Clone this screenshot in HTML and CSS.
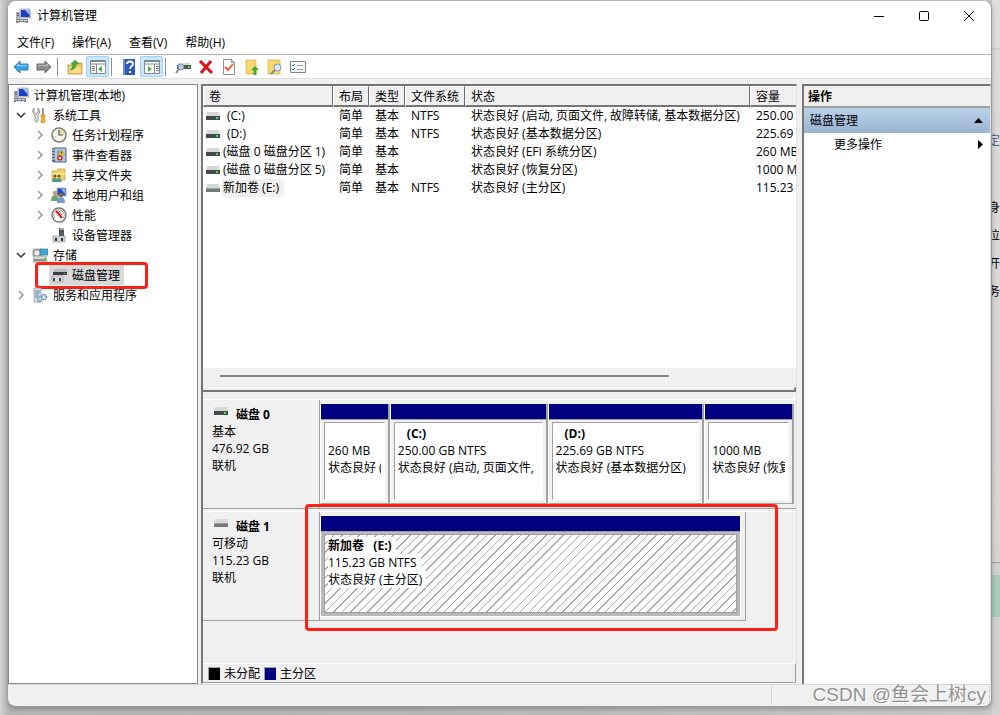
FILE: index.html
```html
<!DOCTYPE html>
<html lang="zh-CN">
<head>
    <meta charset="UTF-8">
    <meta name="viewport" content="width=device-width, initial-scale=1.0">
    <title>计算机管理</title>
    <link rel="stylesheet" href="styles.css">
</head>
<body>
    <!-- 图标库 -->
    <svg class="sprite" aria-hidden="true">
        <symbol id="i-computer" viewBox="0 0 16 16">
            <path d="M5 1h10l1 9H5z" fill="#c9cdd4" stroke="#8b8f98" stroke-width=".6"/>
            <path d="M6 2h8l.7 7H6z" fill="#1c3fc4"/>
            <path d="M10 2h4l.5 5z" fill="#9dc1f5"/>
            <path d="M1 4h4v8H1z" fill="#a9aeb3"/>
            <path d="M2 5h2v1H2zM2 7h2v1H2z" fill="#5d656e"/>
            <path d="M1 11h12v4H1z" fill="#7d858c"/>
            <path d="M2 12h2v1H2zM5 12h3v1H5zM9 12h3v1H9zM3 14h8v1H3z" fill="#e1e4e6"/>
        </symbol>
        <symbol id="i-tools" viewBox="0 0 16 16">
            <path d="M2 1v4l2 2 2-2V1q3 2 1 6l-1 1v6q-2 3-3 0V8Q-1 5 2 1z" fill="#dfe2e4" stroke="#7d8184" stroke-width=".8"/>
            <path d="M10 1h2v7h-2z" fill="#9a9a9a"/>
            <path d="M9 8h4v2h-1l1 5q-2 2-4 0l1-5H9z" fill="#f5b51c" stroke="#b77908" stroke-width=".6"/>
        </symbol>
        <symbol id="i-clock" viewBox="0 0 16 16">
            <circle cx="8" cy="8" r="7" fill="#f7f3e4" stroke="#7c7c7c" stroke-width="1.5"/>
            <path d="M8 8V2a6 6 0 0 1 6 6z" fill="#f1d99a"/>
            <path d="M8 3v5h4" fill="none" stroke="#3b5e91" stroke-width="1.2"/>
        </symbol>
        <symbol id="i-event" viewBox="0 0 16 16">
            <path d="M3 1h12v14H3z" fill="#b4cce3" stroke="#46627f"/>
            <path d="M1 1h3v14H1z" fill="#526f8c"/>
            <path d="M1 3h3M1 6h3M1 9h3M1 12h3" stroke="#dce7f0"/>
            <path d="M6 4h3M6 6h2M6 8h2M6 10h1M6 12h1" stroke="#5d7fa3"/>
            <path d="M10.500 3l3.500 5H7z" fill="#f8cf21" stroke="#a7820a" stroke-width=".5"/>
            <path d="M10.500 4.500v2" stroke="#333"/>
            <circle cx="9" cy="11" r="2.800" fill="#d9372b"/>
            <path d="M8 10l2 2m0-2l-2 2" stroke="#fff"/>
        </symbol>
        <symbol id="i-share" viewBox="0 0 16 16">
            <path d="M1 4h5l1-2h7v11H1z" fill="#f4cf62" stroke="#c69c2d" stroke-width=".7"/>
            <path d="M1 6h13v2H1z" fill="#fbe59e"/>
            <circle cx="4" cy="9" r="1.5" fill="#6a5136"/><circle cx="8" cy="9" r="1.5" fill="#6a5136"/>
            <path d="M1 15q0-4 3-4t2 4zM6 15q0-4 2-4t3 4z" fill="#4c9b86"/>
        </symbol>
        <symbol id="i-users" viewBox="0 0 16 16">
            <path d="M6 1h9v8H6z" fill="#1f49c9" stroke="#b4bac6"/>
            <path d="M10 2h4v5z" fill="#8eb5f2"/>
            <circle cx="4" cy="6" r="2.3" fill="#c79c66"/><circle cx="10" cy="8" r="2.3" fill="#8f6337"/>
            <path d="M0 14q0-6 4-6t4 6z" fill="#6ba56b"/>
            <path d="M6 16q0-6 4-6t4 6z" fill="#7a99cf"/>
        </symbol>
        <symbol id="i-perf" viewBox="0 0 16 16">
            <circle cx="8" cy="8" r="7" fill="#fff" stroke="#777" stroke-width="1.4"/>
            <path d="M4 11a5 5 0 1 1 8 0" fill="none" stroke="#999"/>
            <path d="M5 4l6 7" stroke="#d22323" stroke-width="2"/>
            <path d="M8 4l3 4" stroke="#d22323"/>
        </symbol>
        <symbol id="i-device" viewBox="0 0 16 16">
            <path d="M8 1h5v9H8z" fill="#4f5254"/><path d="M9 1h4v2H9z" fill="#a7aaac"/>
            <path d="M11 6h1v1h-1z" fill="#3fe04e"/>
            <path d="M2 9h12v6H2z" fill="#d2d5d7" stroke="#898c8f" stroke-width=".6"/>
            <path d="M4 11h2v3H4zM10 11h2v3h-2z" fill="#303235"/>
        </symbol>
        <symbol id="i-storage" viewBox="0 0 16 16">
            <path d="M1 2h9v7H1z" fill="#cfd2d3" stroke="#8d9193" stroke-width=".6"/>
            <circle cx="5" cy="6" r="3.5" fill="#e8eaec" stroke="#777"/>
            <path d="M8 2h8v6H8z" fill="#40a8d9" stroke="#2a718f" stroke-width=".6"/>
            <path d="M2 9h12l1 6H1z" fill="#d5d8da" stroke="#808487" stroke-width=".6"/>
            <path d="M2 12h11v2H2z" fill="#8b9092"/><path d="M12 11h2v3h-2z" fill="#4fd04d"/>
        </symbol>
        <symbol id="i-diskmgr" viewBox="0 0 16 16">
            <path d="M4 2h12v3H2z" fill="#b8bbbd"/><path d="M2 5h14v3H2z" fill="#3c3f41"/>
            <path d="M13 6h1v1h-1z" fill="#41dd4e"/>
            <path d="M1 9h11v6H1z" fill="#d9dbdc" stroke="#96999b" stroke-width=".6"/>
            <path d="M2 11h2v3H2zM8 11h2v3H8z" fill="#3b3e40"/>
        </symbol>
        <symbol id="i-services" viewBox="0 0 16 16">
            <path d="M2 1h7v14H2z" fill="#dbe4e9" stroke="#899ba7" stroke-width=".8"/>
            <path d="M3 4h5M3 6h5M3 8h4M3 10h3" stroke="#67839a"/>
            <circle cx="8" cy="12" r="2.5" fill="#c4d6e4" stroke="#6d8ba4" stroke-width="1.5" stroke-dasharray="1.3 .7"/>
            <circle cx="12" cy="10" r="2.5" fill="#dce8f0" stroke="#5d819f" stroke-width="1.5" stroke-dasharray="1.3 .7"/>
        </symbol>
        <symbol id="i-drive" viewBox="0 0 14 8">
            <path d="M1 0h12l1 4H0z" fill="#d5d7d9"/><path d="M0 4h14v4H0z" fill="#46494b"/>
            <path d="M10 5h2v2h-2z" fill="#3de24a"/>
        </symbol>
        <symbol id="i-drive-off" viewBox="0 0 14 8">
            <path d="M1 0h12l1 4H0z" fill="#d5d7d9"/><path d="M0 4h14v4H0z" fill="#77797b"/>
            <path d="M0 4h14v1H0z" fill="#999c9e"/>
        </symbol>
        <symbol id="i-back" viewBox="0 0 16 16">
            <path d="M1 8l6-6v3h8v6H7v3z" fill="#37a5e6" stroke="#3879ad"/><path d="M3 7l3-3v2h8v1z" fill="#83cdf6"/>
        </symbol>
        <symbol id="i-forward" viewBox="0 0 16 16">
            <path d="M15 8L9 2v3H1v6h8v3z" fill="#8f8f8f" stroke="#696969"/><path d="M13 7l-3-3v2H2v1z" fill="#bcbcbc"/>
        </symbol>
        <symbol id="i-up" viewBox="0 0 16 16">
            <path d="M1 6h8l1-2h5v11H1z" fill="#efc75f" stroke="#b99237" stroke-width=".8"/>
            <path d="M2 8h12v6H2z" fill="#f9dd8d"/>
            <path d="M3 11q3-1 3-6H4l4-4 4 4H9q0 6-6 6z" fill="#43b338" stroke="#2c8423" stroke-width=".5"/>
        </symbol>
        <symbol id="i-tree" viewBox="0 0 16 14">
            <path d="M.5.500h15v13H.5z" fill="#fff" stroke="#7e8890"/><path d="M1 1h14v1H1z" fill="#7e8890"/>
            <path d="M1 4h14M6.500 4v9" stroke="#7e8890"/><path d="M2 6.500h3M2 8.500h3M2 10.500h3" stroke="#64798b"/>
            <path d="M12 6v6L8 9z" fill="#4aac3b"/>
        </symbol>
        <symbol id="i-help" viewBox="0 0 16 16">
            <path d="M2 0h12v16H2z" fill="#3059b9"/><path d="M2 0h2v16H2z" fill="#6c8bd3"/>
            <path d="M6 5q0-2.500 3-2.500T12 5q0 1-1.500 2.200Q9 8.500 9 10" fill="none" stroke="#fff" stroke-width="1.800"/>
            <path d="M8 12h2v2H8z" fill="#fff"/>
        </symbol>
        <symbol id="i-pane" viewBox="0 0 16 14">
            <path d="M.5.500h15v13H.5z" fill="#fff" stroke="#7e8890"/><path d="M1 1h14v1H1z" fill="#7e8890"/>
            <path d="M1 4h14M10.500 4v9" stroke="#7e8890"/><path d="M12 6.500h3M12 8.500h3M12 10.500h3" stroke="#64798b"/>
            <path d="M4 6v6l4-3z" fill="#4aac3b"/>
        </symbol>
        <symbol id="i-scan" viewBox="0 0 16 16">
            <path d="M3 4h12l1 2H2z" fill="#d5d7d9"/><path d="M2 6h14v4H2z" fill="#505457"/>
            <path d="M13 7h2v2h-2z" fill="#3de24a"/>
            <circle cx="6" cy="8" r="3" fill="#b7d0e2" stroke="#758b9b"/><path d="M4 10l-3 4" stroke="#828b92" stroke-width="2"/>
        </symbol>
        <symbol id="i-delete" viewBox="0 0 16 16">
            <path d="M2 2l12 12M13 2L3 14" stroke="#d80f17" stroke-width="3"/>
        </symbol>
        <symbol id="i-check" viewBox="0 0 16 16">
            <path d="M2.500.500h8l3 3v12h-11z" fill="#fdfdfd" stroke="#8b9195"/><path d="M10.500.500v3h3" fill="none" stroke="#8b9195"/>
            <path d="M4 8l3 3 5-6" fill="none" stroke="#e3572b" stroke-width="1.800"/>
        </symbol>
        <symbol id="i-export" viewBox="0 0 16 16">
            <path d="M2 1h10v14H2z" fill="#f8d771" stroke="#d6ae45" stroke-width=".7"/><path d="M12 8l2 2v5h-2z" fill="#fff0ba"/>
            <path d="M11 7l4 4h-2.500v5h-3v-5H7z" fill="#38af32"/>
        </symbol>
        <symbol id="i-find" viewBox="0 0 16 16">
            <path d="M1 1h12v14H1z" fill="#f8d771" stroke="#d6ae45" stroke-width=".7"/>
            <circle cx="10.500" cy="8.500" r="3.500" fill="#d5ebf7" stroke="#8599a7"/><path d="M8 11l-4 4" stroke="#7f8a92" stroke-width="2"/>
        </symbol>
        <symbol id="i-props" viewBox="0 0 16 12">
            <path d="M.5.500h15v11H.5z" fill="#f9fafb" stroke="#7c858c"/>
            <path d="M2 4l1 1 2-2M2 8l1 1 2-2" fill="none" stroke="#2f75b7"/><path d="M7 4.500h6M7 8.500h6" stroke="#9aa2a8"/>
        </symbol>
        <symbol id="i-open" viewBox="0 0 10 10"><path d="M1 3l4 4 4-4" fill="none" stroke="#333" stroke-width="1.500"/></symbol>
        <symbol id="i-closed" viewBox="0 0 10 10"><path d="M3 1l4 4-4 4" fill="none" stroke="#8c8c8c" stroke-width="1.300"/></symbol>
    </svg>

    <!-- 窗口后面的网页 -->
    <div class="backdrop">
        <div class="backdrop-head"></div>
        <div class="backdrop-text"><span>定</span><span>身</span><span>位</span><span>开</span><span>务</span></div>
        <div class="backdrop-green"></div>
    </div>

    <main class="window">
        <header class="titlebar">
            <svg class="icon"><use href="#i-computer"/></svg>
            <span class="title">计算机管理</span>
            <button class="win-btn" aria-label="最小化"><svg viewBox="0 0 12 12"><path d="M1 6.500h10"/></svg></button>
            <button class="win-btn" aria-label="最大化"><svg viewBox="0 0 12 12"><rect x="1.500" y="1.500" width="9" height="9" rx="1"/></svg></button>
            <button class="win-btn" aria-label="关闭"><svg viewBox="0 0 12 12"><path d="M1 1l10 10M11 1L1 11"/></svg></button>
        </header>

        <nav class="menubar">
            <button>文件(F)</button>
            <button>操作(A)</button>
            <button>查看(V)</button>
            <button>帮助(H)</button>
        </nav>

        <div class="toolbar">
            <button aria-label="后退"><svg class="icon"><use href="#i-back"/></svg></button>
            <button aria-label="前进"><svg class="icon"><use href="#i-forward"/></svg></button>
            <span class="sep"></span>
            <button aria-label="向上"><svg class="icon"><use href="#i-up"/></svg></button>
            <button class="on" aria-label="显示控制台树"><svg class="icon"><use href="#i-tree"/></svg></button>
            <span class="sep"></span>
            <button aria-label="帮助"><svg class="icon"><use href="#i-help"/></svg></button>
            <button class="on" aria-label="显示操作窗格"><svg class="icon"><use href="#i-pane"/></svg></button>
            <span class="sep"></span>
            <button aria-label="重新扫描"><svg class="icon"><use href="#i-scan"/></svg></button>
            <button aria-label="删除"><svg class="icon"><use href="#i-delete"/></svg></button>
            <button aria-label="标记"><svg class="icon"><use href="#i-check"/></svg></button>
            <button aria-label="打开"><svg class="icon"><use href="#i-export"/></svg></button>
            <button aria-label="浏览"><svg class="icon"><use href="#i-find"/></svg></button>
            <button aria-label="属性"><svg class="icon"><use href="#i-props"/></svg></button>
        </div>

        <div class="panes">
            <!-- 左侧：控制台树 -->
            <aside class="tree">
                <div class="node root"><svg class="icon"><use href="#i-computer"/></svg><span>计算机管理(本地)</span></div>
                <ul>
                    <li>
                        <div class="node"><button class="chev" aria-label="折叠"><svg><use href="#i-open"/></svg></button><svg class="icon"><use href="#i-tools"/></svg><span>系统工具</span></div>
                        <ul>
                            <li class="node"><button class="chev" aria-label="展开"><svg><use href="#i-closed"/></svg></button><svg class="icon"><use href="#i-clock"/></svg><span>任务计划程序</span></li>
                            <li class="node"><button class="chev" aria-label="展开"><svg><use href="#i-closed"/></svg></button><svg class="icon"><use href="#i-event"/></svg><span>事件查看器</span></li>
                            <li class="node"><button class="chev" aria-label="展开"><svg><use href="#i-closed"/></svg></button><svg class="icon"><use href="#i-share"/></svg><span>共享文件夹</span></li>
                            <li class="node"><button class="chev" aria-label="展开"><svg><use href="#i-closed"/></svg></button><svg class="icon"><use href="#i-users"/></svg><span>本地用户和组</span></li>
                            <li class="node"><button class="chev" aria-label="展开"><svg><use href="#i-closed"/></svg></button><svg class="icon"><use href="#i-perf"/></svg><span>性能</span></li>
                            <li class="node"><i class="chev"></i><svg class="icon"><use href="#i-device"/></svg><span>设备管理器</span></li>
                        </ul>
                    </li>
                    <li>
                        <div class="node"><button class="chev" aria-label="折叠"><svg><use href="#i-open"/></svg></button><svg class="icon"><use href="#i-storage"/></svg><span>存储</span></div>
                        <ul>
                            <li class="node marked"><i class="chev"></i><div class="selected"><svg class="icon"><use href="#i-diskmgr"/></svg><span>磁盘管理</span></div></li>
                        </ul>
                    </li>
                    <li class="node"><button class="chev" aria-label="展开"><svg><use href="#i-closed"/></svg></button><svg class="icon"><use href="#i-services"/></svg><span>服务和应用程序</span></li>
                </ul>
            </aside>

            <!-- 中间：卷列表和磁盘图 -->
            <section class="center">
                <div class="volumes">
                    <table>
                        <colgroup><col class="c-name"><col class="c-short"><col class="c-short"><col class="c-fs"><col class="c-status"><col class="c-size"></colgroup>
                        <thead>
                            <tr><th>卷</th><th>布局</th><th>类型</th><th>文件系统</th><th>状态</th><th>容量</th></tr>
                        </thead>
                        <tbody>
                            <tr><td><svg class="drive"><use href="#i-drive"/></svg><span class="letter">(C:)</span></td><td>简单</td><td>基本</td><td>NTFS</td><td>状态良好 (启动, 页面文件, 故障转储, 基本数据分区)</td><td>250.00 GB</td></tr>
                            <tr><td><svg class="drive"><use href="#i-drive"/></svg><span class="letter">(D:)</span></td><td>简单</td><td>基本</td><td>NTFS</td><td>状态良好 (基本数据分区)</td><td>225.69 GB</td></tr>
                            <tr><td><svg class="drive"><use href="#i-drive"/></svg><span>(磁盘 0 磁盘分区 1)</span></td><td>简单</td><td>基本</td><td></td><td>状态良好 (EFI 系统分区)</td><td>260 MB</td></tr>
                            <tr><td><svg class="drive"><use href="#i-drive"/></svg><span>(磁盘 0 磁盘分区 5)</span></td><td>简单</td><td>基本</td><td></td><td>状态良好 (恢复分区)</td><td>1000 MB</td></tr>
                            <tr><td><svg class="drive"><use href="#i-drive-off"/></svg><span class="current">新加卷 (E:)</span></td><td>简单</td><td>基本</td><td>NTFS</td><td>状态良好 (主分区)</td><td>115.23 GB</td></tr>
                        </tbody>
                    </table>
                </div>
                <div class="hscroll"><div class="thumb"></div></div>
                <div class="splitter"></div>

                <div class="disks">
                    <div class="disk">
                        <div class="disk-info">
                            <h2><svg class="drive"><use href="#i-drive"/></svg>磁盘 0</h2>
                            <p>基本</p><p>476.92 GB</p><p>联机</p>
                        </div>
                        <div class="parts parts-four">
                            <div class="part"><div class="bar"></div><div class="box"><p>&nbsp;</p><p>260 MB</p><p>状态良好 (</p></div></div>
                            <div class="part"><div class="bar"></div><div class="box"><p class="name letter-only">(C:)</p><p>250.00 GB NTFS</p><p>状态良好 (启动, 页面文件,</p></div></div>
                            <div class="part"><div class="bar"></div><div class="box"><p class="name letter-only">(D:)</p><p>225.69 GB NTFS</p><p>状态良好 (基本数据分区)</p></div></div>
                            <div class="part"><div class="bar"></div><div class="box"><p>&nbsp;</p><p>1000 MB</p><p>状态良好 (恢复分区)</p></div></div>
                        </div>
                    </div>
                    <div class="disk removable">
                        <div class="disk-info">
                            <h2><svg class="drive"><use href="#i-drive-off"/></svg>磁盘 1</h2>
                            <p>可移动</p><p>115.23 GB</p><p>联机</p>
                        </div>
                        <div class="parts parts-one">
                            <div class="part active"><div class="bar"></div><div class="box"><p class="name"><span>新加卷&nbsp;&nbsp; (E:)</span></p><p><span>115.23 GB NTFS</span></p><p><span>状态良好 (主分区)</span></p></div></div>
                        </div>
                        <div class="mark"></div>
                    </div>
                </div>

                <div class="legend">
                    <span class="swatch black"></span>未分配
                    <span class="swatch navy"></span>主分区
                </div>
            </section>

            <!-- 右侧：操作 -->
            <aside class="actions">
                <h2>操作</h2>
                <button class="group">磁盘管理<svg viewBox="0 0 9 5"><path d="M0 5L4.500 0 9 5z"/></svg></button>
                <button class="more">更多操作<svg viewBox="0 0 5 9"><path d="M0 0l5 4.500L0 9z"/></svg></button>
            </aside>
        </div>

        <footer class="statusbar"><span></span><span></span><span></span></footer>
        <div class="watermark">CSDN @鱼会上树cy</div>
    </main>
</body>
</html>
```

FILE: styles.css
```css
* {
    box-sizing: border-box;
}

body {
    margin: 0;
    padding: 1px 8px 8px;
    min-height: 100vh;
    position: relative;
    background: linear-gradient(90deg, #d2d3d3, #b4b4b4 8px, #b9b9b9 50%, #c8c8c8);
    color: #000;
    font: 12px/17px "Open Sans", "Noto Sans CJK SC", sans-serif;
}

h2, p, ul {
    margin: 0;
    padding: 0;
    font-size: 12px;
}

ul {
    list-style: none;
}

button {
    border: 0;
    padding: 0;
    background: none;
    color: inherit;
    font: inherit;
}

svg {
    display: block;
    flex: none;
}

.sprite {
    position: absolute;
    width: 0;
    height: 0;
}

.icon {
    width: 16px;
    height: 16px;
}

.drive {
    width: 14px;
    height: 8px;
}

/* 背景网页 */
.backdrop {
    position: absolute;
    top: 0;
    right: 0;
    bottom: 0;
    width: 8px;
    overflow: hidden;
    background: #d2d2d2;
}

.backdrop-head {
    height: 50px;
    background: #dedede;
    border-bottom: 2px solid #cfcfcf;
}

.backdrop-text {
    display: flex;
    flex-direction: column;
    gap: 11px;
    height: 513px;
    padding-top: 82px;
    border-bottom: 1px solid #999;
    background: linear-gradient(#dcdcdc, #d8d4d2);
    white-space: nowrap;
    direction: rtl;
}

    .backdrop-text span:first-child {
        color: #50618a;
        margin-bottom: 39px;
    }

.backdrop-green {
    height: 42px;
    margin-top: 12px;
    background: #aacdb9;
}

/* 窗口 */
.window {
    display: flex;
    flex-direction: column;
    min-height: calc(100vh - 9px);
    position: relative;
    overflow: hidden;
    border: solid #999;
    border-width: 0 1px 1px 0;
    border-radius: 8px;
    background: #f0f0f0;
    box-shadow: 0 2px 5px rgba(0, 0, 0, .25);
}

.titlebar {
    display: flex;
    align-items: center;
    height: 29px;
    padding-left: 7px;
    background: #fff;
}

.title {
    flex: 1;
    margin-left: 6px;
}

.win-btn {
    width: 45px;
    height: 28px;
}

    .win-btn svg {
        width: 12px;
        height: 12px;
        margin: auto;
        fill: none;
        stroke: #000;
    }

.menubar {
    display: flex;
    gap: 18px;
    height: 25px;
    padding-left: 9px;
    background: #fff;
    border-bottom: 1px solid #b3b3b3;
}

.toolbar {
    display: flex;
    align-items: center;
    height: 24px;
    padding-left: 1px;
    background: #fff;
    border-bottom: 1px solid #dcdcdc;
}

    .toolbar button {
        display: flex;
        align-items: center;
        justify-content: center;
        width: 23px;
        height: 21px;
    }

    .toolbar .on {
        border: 1px solid #99d1ff;
        border-radius: 2px;
        background: #cce8ff;
    }

.sep {
    width: 1px;
    height: 18px;
    margin: 0 5px 0 2px;
    background: #8d8d8d;
}

.panes {
    display: grid;
    grid-template-columns: 190px minmax(0, 1fr) 189px;
    flex: 1;
    margin-top: 5px;
}

/* 控制台树 */
.tree {
    border: 1px solid #828790;
    padding: 0 1px;
    background: #fff;
}

    .tree ul ul {
        padding-left: 19px;
    }

.node {
    display: flex;
    align-items: center;
    height: 20px;
    position: relative;
    white-space: nowrap;
}

    .node span {
        margin-left: 5px;
    }

.root {
    padding-left: 3px;
}

.chev {
    flex: none;
    width: 22px;
}

    .chev svg {
        width: 10px;
        height: 10px;
        margin: auto;
    }

.selected {
    display: flex;
    align-items: center;
    height: 20px;
    margin-left: -2px;
    padding: 0 4px 0 2px;
    background: #d9d9d9;
}

/* 红色标注框 */
.marked::after,
.mark {
    content: "";
    position: absolute;
    border: 3px solid #ff2015;
    border-radius: 4px;
}

.marked::after {
    inset: -3px 48px -4px 6px;
}

.mark {
    inset: -8px 18px -10px 102px;
}

/* 中间窗格 */
.center {
    display: flex;
    flex-direction: column;
    margin: 0 5px 0 3px;
    border-top: 2px solid #767676;
    border-left: 2px solid #767676;
    border-right: 1px solid #e3e3e3;
    border-bottom: 1px solid #fff;
}

.volumes {
    height: 282px;
    overflow: hidden;
    background: #fff;
}

    .volumes table {
        width: 650px;
        border-collapse: separate;
        border-spacing: 0;
        table-layout: fixed;
    }

    .volumes th {
        height: 21px;
        padding: 0 0 0 5px;
        border: solid;
        border-width: 1px 1px 2px 1px;
        border-color: #fff #696969 #767676 #fff;
        background: #f0f0f0;
        font-weight: normal;
        text-align: left;
    }

    .volumes td {
        height: 18px;
        padding: 0 0 0 6px;
        line-height: 18px;
        white-space: nowrap;
    }

        .volumes td:first-child {
            display: flex;
            align-items: center;
            padding-left: 3px;
        }

        .volumes td span {
            margin-left: 2px;
            padding: 0 1px;
        }

        .volumes td .letter {
            margin-left: 6px;
        }

        .volumes td .current {
            padding-right: 5px;
            background: #f0f0f0;
        }

.c-name {
    width: 130px;
}

.c-short {
    width: 36px;
}

.c-fs {
    width: 60px;
}

.c-status {
    width: 285px;
}

.hscroll {
    height: 19px;
    padding: 7px 127px 0 17px;
}

.thumb {
    height: 2px;
    background: #858585;
}

.splitter {
    height: 5px;
    border-top: 1px solid #fff;
    border-right: 2px solid #767676;
    border-bottom: 2px solid #767676;
}

.disks {
    flex: 1;
    padding-top: 7px;
}

.disk {
    display: grid;
    grid-template-columns: 117px minmax(0, 1fr);
    height: 110px;
    position: relative;
    border-top: 1px solid #fff;
    border-bottom: 1px solid #a0a0a0;
}

.removable {
    margin-top: 2px;
    border-bottom: 0;
}

.disk-info {
    padding: 6px 0 0 9px;
    border-right: 1px solid #a0a0a0;
    box-shadow: inset -2px 0 #f0f0f0, inset -3px 0 #fff;
}

    .disk-info h2 {
        display: flex;
        gap: 8px;
        padding-left: 2px;
        line-height: 17px;
    }

    .disk-info .drive {
        margin-top: 1px;
    }

.removable .disk-info {
    border-bottom: 1px solid #a0a0a0;
}

.parts {
    display: grid;
    padding-top: 4px;
}

.parts-four {
    grid-template-columns: 70fr 158fr 157fr 90fr;
    margin-right: 2px;
    padding-bottom: 4px;
}

.parts-one {
    margin-right: 50px;
    padding: 4px 4px 3px 0;
    border-right: 1px solid #a0a0a0;
    border-bottom: 1px solid #a0a0a0;
}

.part {
    display: flex;
    flex-direction: column;
    min-width: 0;
    border-left: 1px solid #fff;
    border-right: 2px solid #a0a0a0;
    border-bottom: 1px solid #a0a0a0;
}

.bar {
    height: 16px;
    border-bottom: 1px solid #a0a0a0;
    background: #000080;
}

.box {
    flex: 1;
    margin: 2px 3px 3px;
    padding: 2px 3px;
    overflow: hidden;
    border: 1px solid #a0a0a0;
    border-right-color: #fff;
    border-bottom-color: #fff;
    background: #fff;
    white-space: nowrap;
}

    .box p {
        overflow: hidden;
    }

.name {
    font-weight: bold;
}

.letter-only {
    padding-left: 9px;
}

.active {
    background: #b9b9b9;
    border-color: #fff;
    border-right-width: 1px;
}

    .active .box {
        border-color: #a0a0a0;
        background: repeating-linear-gradient(135deg, #a8a8a8 0 1px, #fff 1px 6px);
    }

    .active p span {
        display: inline-block;
        padding-right: 4px;
        background: #fff;
    }

.legend {
    display: flex;
    align-items: center;
    gap: 4px;
    height: 20px;
    padding-left: 5px;
    border: solid;
    border-width: 1px 1px 1px 0;
    border-color: #fff #a0a0a0 #a0a0a0;
}

.swatch {
    width: 12px;
    height: 13px;
    border: solid #a0a0a0;
    border-width: 1px 0 0 1px;
}

.black {
    background: #000;
}

.navy {
    background: #000080;
}

/* 操作窗格 */
.actions {
    border-top: 2px solid #767676;
    border-left: 2px solid #767676;
    border-right: 1px solid #e3e3e3;
    background: #fff;
}

    .actions h2 {
        height: 22px;
        padding-left: 4px;
        border-bottom: 2px solid #a0a0a0;
        background: #f0f0f0;
        line-height: 21px;
    }

    .actions button {
        display: flex;
        align-items: center;
        justify-content: space-between;
        width: 100%;
        height: 23px;
        padding: 0 7px 0 6px;
    }

    .actions .group {
        height: 25px;
        background: linear-gradient(#bad1ea, #99b4d1);
    }

    .actions .more {
        padding-left: 30px;
    }

.group svg {
    width: 9px;
    height: 5px;
}

.more svg {
    width: 5px;
    height: 9px;
}

.statusbar {
    display: grid;
    grid-template-columns: minmax(0, 1fr) 133px 85px;
    height: 22px;
    padding: 1px 1px 1px 0;
    border-top: 1px solid #d7d7d7;
}

    .statusbar span {
        border-right: 1px solid #d7d7d7;
    }

.watermark {
    position: absolute;
    right: 5px;
    bottom: 0;
    color: #929292;
    font: 19px/23px "Liberation Sans", "Noto Sans CJK SC", sans-serif;
    text-shadow: 1px 1px #fff;
}
```
